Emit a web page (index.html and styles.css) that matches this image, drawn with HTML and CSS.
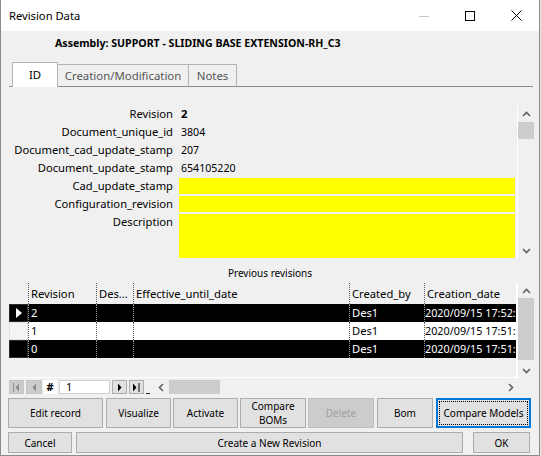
FILE: index.html
```html
<!DOCTYPE html>
<html lang="en">
<head>
  <meta charset="UTF-8">
  <title>Revision Data</title>
  <link rel="stylesheet" href="styles.css">
</head>
<body>
  <div class="window">
    <div class="titlebar">
      <div class="title">Revision Data</div>
      <div class="caption-btns">
        <div class="cap-btn"><svg width="10" height="10" viewBox="0 0 10 10"><path d="M0 5.5H10" stroke="#c4c4c4"/></svg></div>
        <div class="cap-btn"><svg width="10" height="10" viewBox="0 0 10 10"><rect x="0.5" y="0.5" width="9" height="9" fill="none" stroke="#000"/></svg></div>
        <div class="cap-btn"><svg width="11" height="11" viewBox="0 0 11 11"><path d="M0.5 0.5L10.5 10.5M10.5 0.5L0.5 10.5" stroke="#000"/></svg></div>
      </div>
    </div>

    <div class="assembly">Assembly: SUPPORT - SLIDING BASE EXTENSION-RH_C3</div>

    <div class="tabs">
      <div class="tab active tab-id">ID</div>
      <div class="tab tab-creation">Creation/Modification</div>
      <div class="tab tab-notes">Notes</div>
    </div>

    <div class="page">
      <div class="fields">
        <div class="label">Revision</div><div class="value strong">2</div>
        <div class="label">Document_unique_id</div><div class="value">3804</div>
        <div class="label">Document_cad_update_stamp</div><div class="value">207</div>
        <div class="label">Document_update_stamp</div><div class="value">654105220</div>
        <div class="label">Cad_update_stamp</div><div class="value"><div class="edit"></div></div>
        <div class="label">Configuration_revision</div><div class="value"><div class="edit"></div></div>
        <div class="label">Description</div><div class="value"><div class="edit memo"></div></div>
      </div>
      <div class="vscroll">
        <div class="sb-arrow"><svg width="9" height="6" viewBox="0 0 9 6"><path d="M1 5L4.5 1.5L8 5" fill="none" stroke="#606060" stroke-width="1.6"/></svg></div>
        <div class="sb-thumb page-thumb"></div>
        <div class="sb-track"></div>
        <div class="sb-arrow"><svg width="9" height="6" viewBox="0 0 9 6"><path d="M1 1L4.5 4.5L8 1" fill="none" stroke="#606060" stroke-width="1.6"/></svg></div>
      </div>
    </div>

    <div class="section-title">Previous revisions</div>

    <div class="grid-wrap">
      <div class="grid">
        <div class="row head">
          <div class="cell ind"></div>
          <div class="cell">Revision</div>
          <div class="cell">Des...</div>
          <div class="cell">Effective_until_date</div>
          <div class="cell">Created_by</div>
          <div class="cell">Creation_date</div>
        </div>
        <div class="row dark">
          <div class="cell ind current"><svg width="6" height="10" viewBox="0 0 6 10"><path d="M0 0L6 5L0 10Z" fill="#fff"/></svg></div>
          <div class="cell">2</div>
          <div class="cell"></div>
          <div class="cell"></div>
          <div class="cell">Des1</div>
          <div class="cell date">2020/09/15 17:52:</div>
        </div>
        <div class="row light">
          <div class="cell ind"></div>
          <div class="cell">1</div>
          <div class="cell"></div>
          <div class="cell"></div>
          <div class="cell">Des1</div>
          <div class="cell date">2020/09/15 17:51:</div>
        </div>
        <div class="row dark">
          <div class="cell ind"></div>
          <div class="cell">0</div>
          <div class="cell"></div>
          <div class="cell"></div>
          <div class="cell">Des1</div>
          <div class="cell date">2020/09/15 17:51:</div>
        </div>
      </div>
      <div class="vscroll grid-scroll">
        <div class="sb-arrow small"><svg width="9" height="6" viewBox="0 0 9 6"><path d="M1 5L4.5 1.5L8 5" fill="none" stroke="#606060" stroke-width="1.6"/></svg></div>
        <div class="sb-thumb grid-thumb"></div>
        <div class="sb-track"></div>
        <div class="sb-arrow small"><svg width="9" height="6" viewBox="0 0 9 6"><path d="M1 1L4.5 4.5L8 1" fill="none" stroke="#606060" stroke-width="1.6"/></svg></div>
      </div>
    </div>

    <div class="navigator">
      <div class="nav-btn off"><svg width="7" height="9" viewBox="0 0 7 9"><path d="M0.5 0V9" stroke="#8c8c8c"/><path d="M6 0.5L2.5 4.5L6 8.5Z" fill="#8c8c8c"/></svg></div>
      <div class="nav-btn off prev"><svg width="4" height="9" viewBox="0 0 4 9"><path d="M4 0.5L0.5 4.5L4 8.5Z" fill="#8c8c8c"/></svg></div>
      <div class="nav-hash">#</div>
      <div class="nav-input">1</div>
      <div class="nav-btn"><svg width="4" height="9" viewBox="0 0 4 9"><path d="M0 0.5L3.5 4.5L0 8.5Z" fill="#000"/></svg></div>
      <div class="nav-btn"><svg width="7" height="9" viewBox="0 0 7 9"><path d="M0 0.5L3.5 4.5L0 8.5Z" fill="#000"/><path d="M6 0V9" stroke="#000"/></svg></div>
      <div class="nav-dash"></div>
      <div class="hscroll">
        <div class="hs-arrow"><svg width="6" height="9" viewBox="0 0 6 9"><path d="M5 1L1.5 4.5L5 8" fill="none" stroke="#606060" stroke-width="1.6"/></svg></div>
        <div class="hs-thumb"></div>
        <div class="hs-track"></div>
        <div class="hs-arrow"><svg width="6" height="9" viewBox="0 0 6 9"><path d="M1 1L4.5 4.5L1 8" fill="none" stroke="#606060" stroke-width="1.6"/></svg></div>
      </div>
    </div>

    <div class="btn-row actions">
      <button class="btn w-edit">Edit record</button>
      <button class="btn w-mid gap3">Visualize</button>
      <button class="btn w-mid">Activate</button>
      <button class="btn w-cmp two-line">Compare<br>BOMs</button>
      <button class="btn w-cmp disabled">Delete</button>
      <button class="btn w-bom gap3">Bom</button>
      <button class="btn w-edit gap3 focused"><span>Compare Models</span></button>
    </div>

    <div class="btn-row footer">
      <button class="btn w-cancel">Cancel</button>
      <button class="btn w-create">Create a New Revision</button>
      <button class="btn w-ok">OK</button>
    </div>
  </div>
</body>
</html>
```

FILE: styles.css
```css
* { box-sizing: border-box; }

body {
  margin: 0;
  background: #e4e4e4;
  font-family: "Noto Sans", "Liberation Sans", sans-serif;
  font-size: 11.2px;
  color: #000;
}

.window {
  width: 540px;
  height: 456px;
  background: #f0f0f0;
  border: 1px solid #8c8c8c;
  border-top: none;
  display: flex;
  flex-direction: column;
}

/* caption */
.titlebar {
  height: 31px;
  flex: 0 0 auto;
  background: #fff;
  display: flex;
  align-items: center;
}
.title {
  flex: 1;
  padding-left: 8px;
  line-height: 31px;
}
.caption-btns { display: flex; height: 100%; }
.cap-btn {
  width: 46px;
  height: 31px;
  display: flex;
  align-items: center;
  justify-content: center;
}

.assembly {
  height: 24px;
  line-height: 24px;
  padding-left: 54px;
  font-weight: bold;
  font-size: 10.6px;
  flex: 0 0 auto;
}

/* tab strip */
.tabs {
  margin: 7px 6px 0 8px;
  height: 25px;
  flex: 0 0 auto;
  display: flex;
  align-items: flex-end;
  border-bottom: 1px solid #8c8c8c;
  padding-left: 3px;
  font-size: 11.4px;
}
.tab {
  height: 22px;
  line-height: 21px;
  text-align: center;
  border: 1px solid #b4b4b4;
  border-bottom: none;
  border-left: none;
  color: #555;
  background: #f0f0f0;
}
.tab.active {
  height: 25px;
  margin-bottom: -1px;
  line-height: 24px;
  border-left: 1px solid #b4b4b4;
  background: #fff;
  color: #000;
}
.tab-id { width: 46px; }
.tab-creation { width: 131px; }
.tab-notes { width: 48px; }

/* ID page */
.page {
  display: flex;
  padding: 18px 5px 0 0;
  flex: 0 0 auto;
}
.fields {
  flex: 1;
  display: grid;
  grid-template-columns: 172px 1fr;
  grid-template-rows: repeat(6, 18px) 46px;
  column-gap: 6px;
}
.label {
  text-align: right;
  line-height: 18px;
  white-space: nowrap;
}
.value {
  line-height: 18px;
  padding-left: 2px;
  font-size: 10.6px;
}
.value.strong { font-weight: bold; font-size: 11.2px; }
.value:has(.edit) { padding-left: 0; }
.edit {
  height: 16px;
  margin: 1px 2px 1px 0;
  background: #ff0;
}
.edit.memo { height: 44px; }

/* scroll bars */
.vscroll {
  width: 17px;
  flex: 0 0 auto;
  border-left: 1px solid #fff;
  display: flex;
  flex-direction: column;
}
.sb-arrow {
  height: 17px;
  display: flex;
  align-items: center;
  justify-content: center;
}
.sb-arrow.small { height: 15px; }
.sb-thumb { background: #cdcdcd; }
.page-thumb { height: 17px; }
.grid-thumb { height: 62px; }
.sb-track { flex: 1; }

.section-title {
  margin-top: 5px;
  height: 19px;
  line-height: 19px;
  text-align: center;
  font-size: 10px;
  flex: 0 0 auto;
}

/* revisions grid */
.grid-wrap {
  display: flex;
  height: 95px;
  margin: 0 5px 0 8px;
  flex: 0 0 auto;
}
.grid {
  flex: 1;
  overflow: hidden;
  border-right: 1px solid #fff;
  border-bottom: 1px solid #fff;
}
.row {
  display: grid;
  grid-template-columns: 19px 68px 37px 216px 75px 130px;
  height: 18px;
}
.row.head { height: 21px; }
.cell {
  border-left: 1px dotted #5a5a5a;
  padding-left: 2px;
  line-height: 18px;
  white-space: nowrap;
  overflow: hidden;
}
.head .cell { line-height: 21px; }
.cell.date { padding-left: 0; font-size: 10.8px; }
.cell.ind {
  border-left: none;
  padding: 0;
}
.dark { background: #000; color: #fff; }
.dark .cell { border-left-color: #9a9a9a; }
.light { background: #fff; }
.dark .ind { border: 1px solid #2c2c2c; }
.light .ind { background: #f4f4f4; border: 1px solid #e2e2e2; }
.ind.current {
  display: flex;
  align-items: center;
  padding-left: 6px;
}

/* record navigator */
.navigator {
  display: flex;
  align-items: stretch;
  height: 14px;
  margin: 2px 0 0 8px;
  flex: 0 0 auto;
}
.nav-btn {
  width: 15px;
  margin-right: 2px;
  background: #e1e1e1;
  border: 1px solid #adadad;
  display: flex;
  align-items: center;
  justify-content: center;
}
.nav-btn.off { background: #cccccc; border-color: #c4c4c4; }
.nav-btn.prev { width: 16px; margin-right: 1px; }
.nav-hash {
  width: 14px;
  margin-right: 2px;
  background: #fff;
  text-align: center;
  font-size: 11px;
  line-height: 14px;
  font-weight: bold;
}
.nav-input {
  width: 51px;
  margin-right: 2px;
  background: #fff;
  border: 1px solid #d0d0d0;
  padding-left: 6px;
  line-height: 12px;
  font-size: 11px;
}
.nav-dash {
  width: 4px;
  margin: 0 2px 0 0;
  border-bottom: 1px solid #222;
}
.hscroll {
  width: 367px;
  display: flex;
}
.hs-arrow {
  width: 17px;
  display: flex;
  align-items: center;
  justify-content: center;
}
.hs-thumb { width: 51px; background: #cdcdcd; }
.hs-track { flex: 1; }

/* buttons */
.btn-row {
  display: flex;
  margin-left: 7px;
  flex: 0 0 auto;
}
.actions { height: 30px; margin-top: 4px; gap: 2px; }
.footer { height: 21px; margin-top: 4px; }
.btn {
  height: 100%;
  padding: 0;
  background: #e1e1e1;
  border: 1px solid #adadad;
  font-family: inherit;
  font-size: 10px;
  color: #000;
  text-align: center;
}
.btn.gap3 { margin-left: 1px; }
.w-edit { width: 95px; }
.w-mid { width: 65px; }
.w-cmp { width: 66px; }
.w-bom { width: 56px; }
.two-line { line-height: 14px; }
.btn.disabled {
  background: #cccccc;
  border-color: #bfbfbf;
  color: #a0a0a0;
}
.btn.focused {
  border: 2px solid #0078d7;
  padding: 1px;
}
.btn.focused span {
  display: flex;
  height: 100%;
  align-items: center;
  justify-content: center;
  border: 1px dotted #000;
}
.w-cancel { width: 64px; }
.w-create { width: 387px; margin-left: 4px; }
.w-ok { width: 57px; margin-left: 10px; }
```
